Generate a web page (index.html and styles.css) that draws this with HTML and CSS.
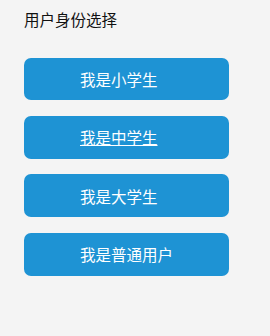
FILE: index.html
```html
<!DOCTYPE html>
<html lang="zh-CN">
<head>
  <meta charset="UTF-8">
  <title>用户身份选择</title>
  <link rel="stylesheet" href="styles.css">
</head>
<body>

  <div class="page">
    <h1 class="title">用户身份选择</h1>

    <div class="role-list">
      <a class="role-btn" href="#">我是小学生</a>
      <a class="role-btn active" href="#">我是中学生</a>
      <a class="role-btn" href="#">我是大学生</a>
      <a class="role-btn" href="#">我是普通用户</a>
    </div>
  </div>

</body>
</html>
```

FILE: styles.css
```css
body {
  margin: 0;
  background-color: #f4f4f4;
  font-family: "Noto Sans CJK SC", "Noto Sans", sans-serif;
}

.page {
  padding: 8px 24px;
}

.title {
  margin: 0;
  font-size: 15.5px;
  font-weight: normal;
  color: #111;
  line-height: 22px;
}

.role-list {
  display: flex;
  flex-direction: column;
  gap: 15.8px;
  margin-top: 27.5px;
  width: 205px;
}

.role-btn {
  display: flex;
  align-items: center;
  height: 42.7px;
  padding-left: 56px;
  box-sizing: border-box;
  background-color: #1e93d4;
  border-radius: 7px;
  color: #fff;
  font-size: 15.5px;
  text-decoration: none;
}

.role-btn.active {
  text-decoration: underline;
}
```
